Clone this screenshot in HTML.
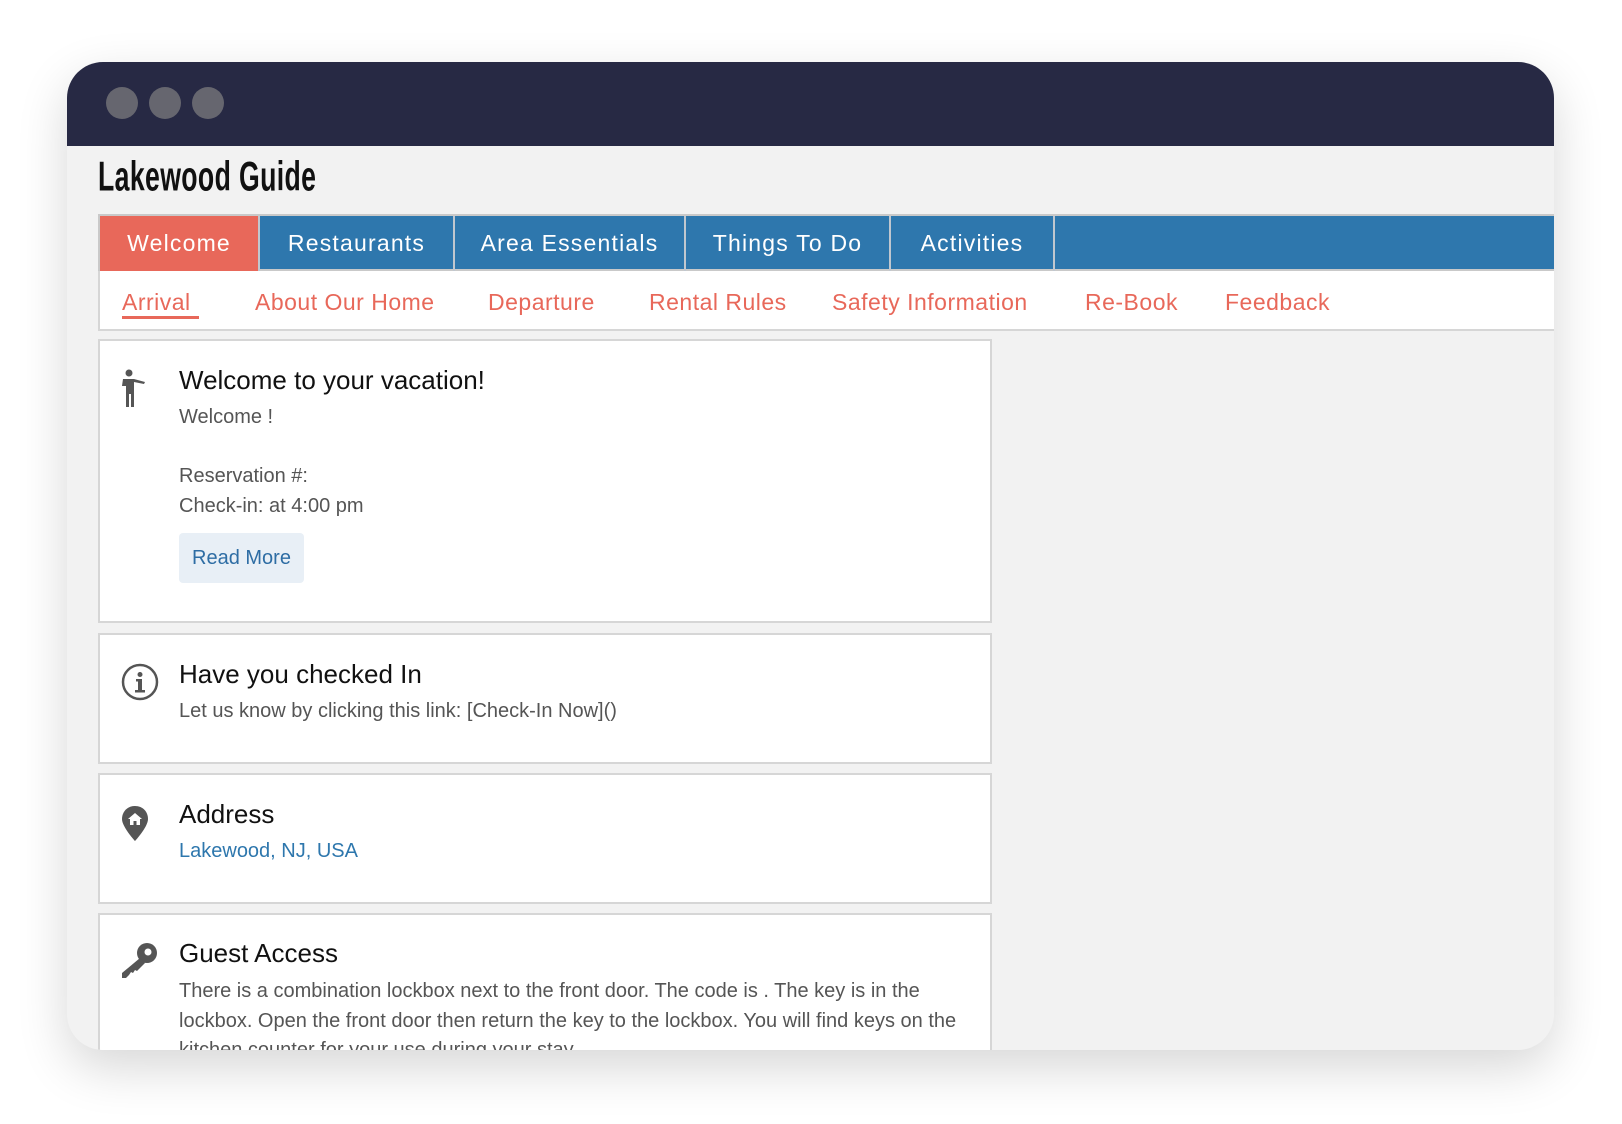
<!DOCTYPE html>
<html><head><meta charset="utf-8"><style>
*{margin:0;padding:0;box-sizing:border-box}
html,body{width:1622px;height:1124px;background:#fff;overflow:hidden;font-family:"Liberation Sans",sans-serif}
.win{position:absolute;left:67px;top:62px;width:1487px;height:988px;border-radius:36px;background:#f2f2f2;overflow:hidden;box-shadow:0 18px 50px rgba(0,0,0,.16)}
.bar{position:absolute;left:0;top:0;width:100%;height:84px;background:#272944}
.dot{position:absolute;top:25px;width:32px;height:32px;border-radius:50%;background:#66666f}
.a{position:absolute;white-space:nowrap;line-height:1}
.tabs{position:absolute;left:31px;top:152px;width:1456px;height:57px;background:#2e77ad;border:2px solid #c9c9c9;border-right:none}
.tab{position:absolute;top:0;height:55px;color:#fff;font-size:23px;letter-spacing:1.2px;text-align:center;line-height:55px;border-right:2px solid #c0c7cf}
.sub{position:absolute;left:31px;top:209px;width:1456px;height:60px;background:#fff;border:2px solid #d6d6d6;border-right:none;border-top:none}
.s{position:absolute;top:20px;color:#e8685a;font-size:23px;letter-spacing:.5px;white-space:nowrap;line-height:1}
.card{position:absolute;left:31px;width:894px;background:#fff;border:2px solid #d6d6d6}
h2{position:absolute;font-weight:normal;font-size:26px;color:#111;line-height:1;white-space:nowrap}
.p{position:absolute;font-size:20px;color:#555;line-height:1;white-space:nowrap}
</style></head><body>
<div class="win">
 <div class="bar"></div>
 <div class="dot" style="left:39px"></div><div class="dot" style="left:82px"></div><div class="dot" style="left:125px"></div>
 <div class="a" style="left:31px;top:94px;font-family:'Liberation Sans Narrow','Liberation Sans',sans-serif;font-size:36px;font-weight:bold;color:#111;transform:scale(0.74,1.15);transform-origin:left top;letter-spacing:.5px">Lakewood Guide</div>
 <div class="tabs">
  <div class="tab" style="left:0;width:160px;background:#e8685a">Welcome</div>
  <div class="tab" style="left:160px;width:195px">Restaurants</div>
  <div class="tab" style="left:355px;width:231px">Area Essentials</div>
  <div class="tab" style="left:586px;width:205px">Things To Do</div>
  <div class="tab" style="left:791px;width:164px">Activities</div>
 </div>
 <div class="sub">
  <div class="s" style="left:22px">Arrival</div>
  <div style="position:absolute;left:22px;top:45px;width:77px;height:3px;background:#e8685a"></div>
  <div class="s" style="left:155px">About Our Home</div>
  <div class="s" style="left:388px">Departure</div>
  <div class="s" style="left:549px">Rental Rules</div>
  <div class="s" style="left:732px">Safety Information</div>
  <div class="s" style="left:985px">Re-Book</div>
  <div class="s" style="left:1125px">Feedback</div>
 </div>
 <!-- card1 -->
 <div class="card" style="top:277px;height:284px">
  <svg style="position:absolute;left:20px;top:28px" width="28" height="40" viewBox="0 0 28 40"><circle cx="9" cy="4" r="3.5" fill="#555"/><path d="M3 10h11l11 3-1 2-10-2v25h-3V25h-2v13H6V17H2z" fill="#555"/></svg>
  <h2 style="left:79px;top:26px">Welcome to your vacation!</h2>
  <div class="p" style="left:79px;top:66px">Welcome !</div>
  <div class="p" style="left:79px;top:125px">Reservation #:</div>
  <div class="p" style="left:79px;top:155px">Check-in: at 4:00 pm</div>
  <div style="position:absolute;left:79px;top:192px;width:125px;height:50px;background:#e8eff6;border-radius:4px;color:#2e6da4;font-size:20px;line-height:50px;text-align:center">Read More</div>
 </div>
 <!-- card2 -->
 <div class="card" style="top:571px;height:131px">
  <svg style="position:absolute;left:20px;top:27px" width="40" height="40" viewBox="0 0 40 40"><circle cx="20" cy="20" r="17" fill="none" stroke="#555" stroke-width="2.5"/><circle cx="20" cy="12.5" r="2.5" fill="#555"/><path d="M16 17h6v11h3v2.5H15V28h3v-8.5h-2z" fill="#555"/></svg>
  <h2 style="left:79px;top:26px">Have you checked In</h2>
  <div class="p" style="left:79px;top:66px">Let us know by clicking this link: [Check-In Now]()</div>
 </div>
 <!-- card3 -->
 <div class="card" style="top:711px;height:131px">
  <svg style="position:absolute;left:20px;top:29px" width="30" height="40" viewBox="0 0 30 40"><path d="M15 2C7 2 2 8 2 15c0 8 13 22 13 22s13-14 13-22C28 8 23 2 15 2z" fill="#555"/><path d="M15 9l-7 6h2v6h3.5v-4h3v4H20v-6h2z" fill="#fff"/></svg>
  <h2 style="left:79px;top:26px">Address</h2>
  <div class="p" style="left:79px;top:66px;color:#2e77ad">Lakewood, NJ, USA</div>
 </div>
 <!-- card4 -->
 <div class="card" style="top:851px;height:200px">
  <svg style="position:absolute;left:20px;top:26px" width="40" height="40" viewBox="0 0 40 40"><circle cx="27" cy="12" r="10" fill="#555"/><circle cx="28" cy="11" r="3.5" fill="#fff"/><path d="M20 17l5 5-8 8-2-1-2 3-2-1-2 3-3 3H2v-5z" fill="#555"/></svg>
  <h2 style="left:79px;top:25px">Guest Access</h2>
  <div class="p" style="left:79px;top:66px">There is a combination lockbox next to the front door. The code is . The key is in the</div>
  <div class="p" style="left:79px;top:96px">lockbox. Open the front door then return the key to the lockbox. You will find keys on the</div>
  <div class="p" style="left:79px;top:125px">kitchen counter for your use during your stay.</div>
 </div>
</div>
</body></html>
